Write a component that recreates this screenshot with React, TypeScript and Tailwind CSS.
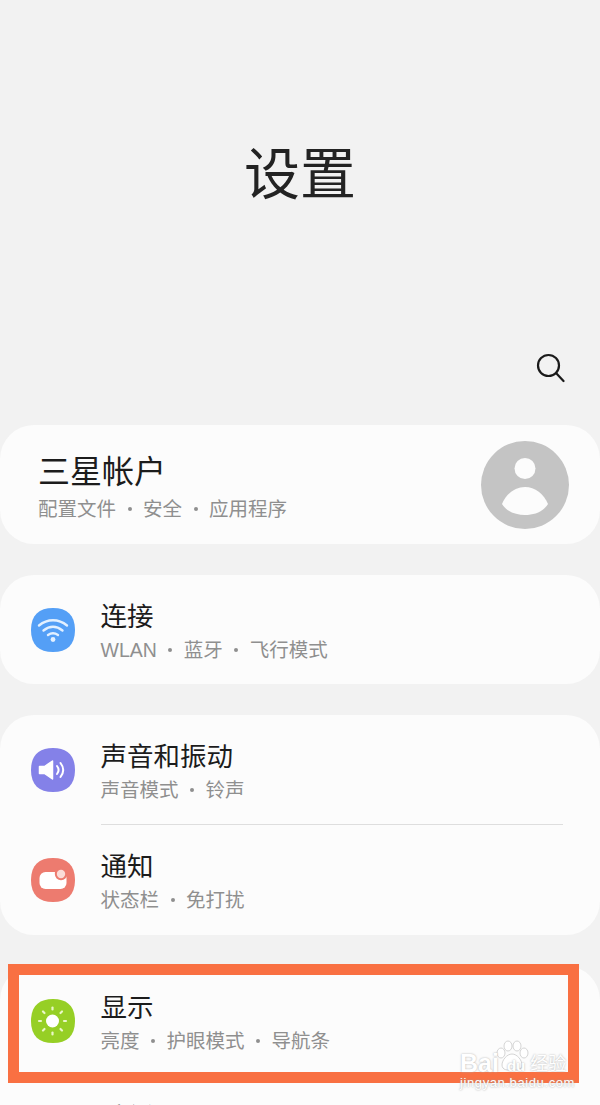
import type { ReactNode } from "react";

const CJK = "font-['Liberation_Sans','Noto_Sans_CJK_SC',sans-serif]";

function Squircle({ color, children }: { color: string; children: ReactNode }) {
  return (
    <svg width="44" height="44" viewBox="0 0 44 44" className="shrink-0">
      <path d="M22 0C36 0 44 7 44 22C44 37 36 44 22 44C8 44 0 37 0 22C0 7 8 0 22 0Z" fill={color} />
      {children}
    </svg>
  );
}

function WifiIcon() {
  return (
    <Squircle color="#549ff6">
      <g fill="none" stroke="#e3f0ff" strokeWidth="2.4" strokeLinecap="round">
        <path d="M8 17.5C16.5 10.5 27.5 10.5 36 17.5" />
        <path d="M12.5 22.5C18.5 17.8 25.5 17.8 31.5 22.5" />
        <path d="M17 27C20 25 24 25 27 27" />
      </g>
      <circle cx="22" cy="31.5" r="2.4" fill="#e3f0ff" />
    </Squircle>
  );
}

function SoundIcon() {
  return (
    <Squircle color="#8481e8">
      <path d="M8.5 18.5H13.5L21.5 13V31L13.5 25.5H8.5Z" fill="#fff" strokeLinejoin="round" stroke="#fff" strokeWidth="1.5" />
      <g fill="none" stroke="#fff" strokeWidth="2" strokeLinecap="round">
        <path d="M26 18C28 20.5 28 23.5 26 26" />
        <path d="M29.5 15C33 19.5 33 24.5 29.5 29" />
      </g>
    </Squircle>
  );
}

function NotifyIcon() {
  return (
    <Squircle color="#ed7b6f">
      <rect x="8.5" y="14" width="27" height="17" rx="6" fill="#fff" />
      <circle cx="30" cy="16" r="6.2" fill="#ed7b6f" />
      <circle cx="30" cy="16" r="4.2" fill="#fbdcd8" />
    </Squircle>
  );
}

function SunIcon() {
  return (
    <Squircle color="#96cf25">
      <circle cx="21.5" cy="22" r="6.5" fill="#fff" />
      <g stroke="#eaf7c8" strokeWidth="2.2" strokeLinecap="round">
        <path d="M21.5 8.5V10.5" />
        <path d="M21.5 33.5V35.5" />
        <path d="M8 22H10" />
        <path d="M33 22H35" />
        <path d="M12 12.5L13.5 14" />
        <path d="M29.5 30L31 31.5" />
        <path d="M31 12.5L29.5 14" />
        <path d="M13.5 30L12 31.5" />
      </g>
    </Squircle>
  );
}

function Sep({ items }: { items: string[] }) {
  return (
    <div className="flex items-center text-[19.5px] leading-[26px] mt-[2px] text-[#8f8f8f] whitespace-nowrap">
      {items.map((item, i) => (
        <span key={item} className="flex items-center">
          {i > 0 && <span className="mx-[11.5px] w-[4px] h-[4px] rounded-full bg-[#8f8f8f]" />}
          {item}
        </span>
      ))}
    </div>
  );
}

function Row({ icon, title, items, border }: { icon: ReactNode; title: string; items: string[]; border?: boolean }) {
  return (
    <div className="flex items-center h-[110px] pl-[31px] gap-[25.5px]">
      {icon}
      <div className={`flex-1 h-full flex flex-col justify-center pt-[2px] mr-[37px] ${border ? "border-b border-[#dedede]" : ""}`}>
        <div className="text-[26.5px] leading-[36px] text-[#1c1c1c]">{title}</div>
        <Sep items={items} />
      </div>
    </div>
  );
}

// paw from the Baidu watermark
function Paw() {
  return (
    <svg width="34" height="32" viewBox="0 0 34 32" fill="#ffffff" stroke="#c9c9c9" strokeWidth="0.8" className="absolute left-[35px] top-0">
      <ellipse cx="6" cy="13" rx="4" ry="5" />
      <ellipse cx="13" cy="6" rx="4" ry="5" />
      <ellipse cx="22" cy="6" rx="4" ry="5" />
      <ellipse cx="29" cy="13" rx="4" ry="5" />
      <path d="M17 14C22 14 27 20 27 25C27 30 21 31 17 29C13 31 7 30 7 25C7 20 12 14 17 14Z" />
    </svg>
  );
}

export default function App() {
  return (
    <div className={`relative w-[600px] h-[1105px] overflow-hidden bg-[#f2f2f2] ${CJK}`}>
      {/* Header */}
      <div className="h-[425px] flex flex-col">
        <h1 className="pt-[136px] text-center text-[56px] leading-[78px] text-[#232323]">设置</h1>
        <div className="flex justify-end pt-[139px] pr-[35px]">
          <svg width="30" height="30" viewBox="0 0 30 30" fill="none" stroke="#1a1a1a" strokeWidth="2.2" strokeLinecap="round">
            <circle cx="13.5" cy="12.5" r="10.5" />
            <path d="M21 20L28.5 28" />
          </svg>
        </div>
      </div>

      <div className="flex flex-col gap-[31px]">
        {/* Account */}
        <div className="h-[119px] rounded-[34px] bg-[#fcfcfc] flex items-center justify-between pl-[38px] pr-[31px]">
          <div className="pt-[2px]">
            <div className="text-[32px] leading-[44px] text-[#1c1c1c]">三星帐户</div>
            <Sep items={["配置文件", "安全", "应用程序"]} />
          </div>
          <svg width="88" height="88" viewBox="0 0 88 88" className="shrink-0">
            <circle cx="44" cy="44" r="44" fill="#c4c4c4" />
            <circle cx="44" cy="27.5" r="10.5" fill="#fcfcfc" />
            <path d="M21 63C25 53 34 46 44 46C54 46 63 53 67 63C62 71 53 74 44 74C35 74 26 71 21 63Z" fill="#fcfcfc" />
          </svg>
        </div>

        <div className="h-[109px] rounded-[34px] bg-[#fcfcfc] flex flex-col justify-center">
          <Row icon={<WifiIcon />} title="连接" items={["WLAN", "蓝牙", "飞行模式"]} />
        </div>

        <div className="rounded-[34px] bg-[#fcfcfc]">
          <Row icon={<SoundIcon />} title="声音和振动" items={["声音模式", "铃声"]} border />
          <Row icon={<NotifyIcon />} title="通知" items={["状态栏", "免打扰"]} />
        </div>

        <div className="rounded-[34px] bg-[#fcfcfc]">
          <Row icon={<SunIcon />} title="显示" items={["亮度", "护眼模式", "导航条"]} />
          <Row icon={<SunIcon />} title="壁纸" items={["壁纸"]} />
        </div>
      </div>

      {/* Annotation frame drawn over the screenshot */}
      <div className="absolute left-[8px] top-[964px] w-[571px] h-[119px] border-[11px] border-[#f97042]" />

      {/* Watermark */}
      <div className="absolute left-[460px] top-[1040px] w-[110px] h-[50px] text-white">
        <Paw />
        <div className="absolute left-0 top-[10px] flex items-end text-[25px] leading-[26px] font-bold [text-shadow:0_0_2px_#aaa]">
          Bai<span className="text-[15px] leading-[20px] ml-[8px]">du</span>
          <span className="ml-[5px] text-[18px] leading-[24px] font-normal">经验</span>
        </div>
        <div className="absolute left-0 top-[36px] text-[13px] leading-[14px] tracking-[0.6px] whitespace-nowrap [text-shadow:0_0_2px_#999]">jingyan.baidu.com</div>
      </div>
    </div>
  );
}
